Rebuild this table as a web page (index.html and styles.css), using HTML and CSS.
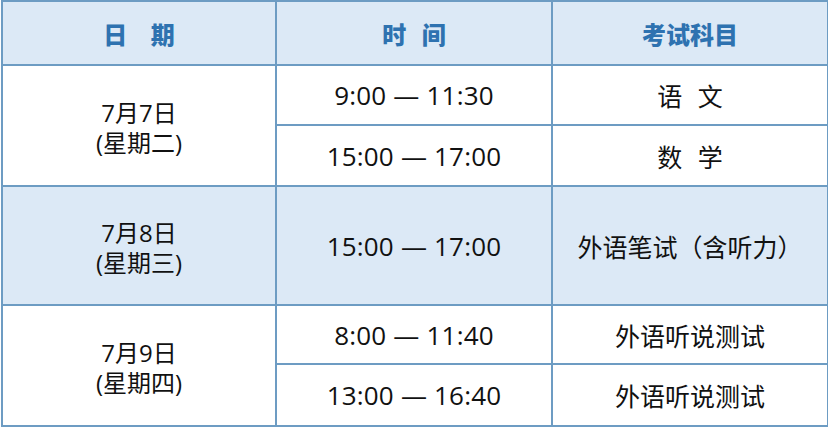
FILE: index.html
```html
<!DOCTYPE html>
<html lang="zh-CN">
<head>
<meta charset="utf-8">
<title>考试时间安排</title>
<link rel="stylesheet" href="styles.css">
</head>
<body>
<table class="schedule">
  <colgroup>
    <col class="c1"><col class="c2"><col class="c3">
  </colgroup>
  <thead>
    <tr class="head">
      <th><span class="sp-wide">日 期</span></th>
      <th><span class="sp-mid">时 间</span></th>
      <th>考试科目</th>
    </tr>
  </thead>
  <tbody>
    <tr class="r1">
      <td rowspan="2" class="date"><div class="line">7月7日</div><div class="line">(星期二)</div></td>
      <td class="time">9:00 — 11:30</td>
      <td><span class="sp-mid">语 文</span></td>
    </tr>
    <tr class="r2">
      <td class="time">15:00 — 17:00</td>
      <td><span class="sp-mid">数 学</span></td>
    </tr>
    <tr class="r3 tint">
      <td class="date"><div class="line">7月8日</div><div class="line">(星期三)</div></td>
      <td class="time">15:00 — 17:00</td>
      <td>外语笔试（含听力）</td>
    </tr>
    <tr class="r4">
      <td rowspan="2" class="date"><div class="line">7月9日</div><div class="line">(星期四)</div></td>
      <td class="time">8:00 — 11:40</td>
      <td>外语听说测试</td>
    </tr>
    <tr class="r5">
      <td class="time">13:00 — 16:40</td>
      <td>外语听说测试</td>
    </tr>
  </tbody>
</table>
</body>
</html>
```

FILE: styles.css
```css
html, body {
  margin: 0;
  padding: 0;
  background: #ffffff;
}

body {
  font-family: "Open Sans", "Noto Sans CJK SC", sans-serif;
  color: #111111;
}

.schedule {
  border-collapse: collapse;
  width: 826px;
  height: 426px;
  table-layout: fixed;
  margin-left: 1px;
}

.c1 { width: 274px; }
.c2 { width: 276px; }
.c3 { width: 276px; }

.schedule th,
.schedule td {
  border: 2px solid #6d9cc3;
  text-align: center;
  vertical-align: middle;
  padding: 0;
}

.head th {
  height: 62px;
  background: #dce9f6;
  color: #2e72b0;
  font-family: "Noto Sans CJK SC", sans-serif;
  font-weight: 900;
  font-size: 24px;
}

.sp-wide { word-spacing: 18px; }
.sp-mid { word-spacing: 10px; }

.schedule td {
  font-family: "Noto Sans CJK SC", sans-serif;
  font-size: 25px;
  line-height: 30px;
}

.schedule td.time {
  font-family: "Open Sans", sans-serif;
  font-size: 26px;
  letter-spacing: 0.2px;
}

.schedule td.date {
  font-family: "Open Sans", "Noto Sans CJK SC", sans-serif;
  font-size: 24px;
}

.line {
  height: 30px;
  line-height: 30px;
}

.line:first-child {
  margin-top: 4px;
}

.r1 td { height: 58px; }
.r2 td { height: 59px; }
.r3 td { height: 117px; }
.r4 td { height: 57px; }
.r5 td { height: 60px; }

.tint td { background: #dce9f6; }
```
